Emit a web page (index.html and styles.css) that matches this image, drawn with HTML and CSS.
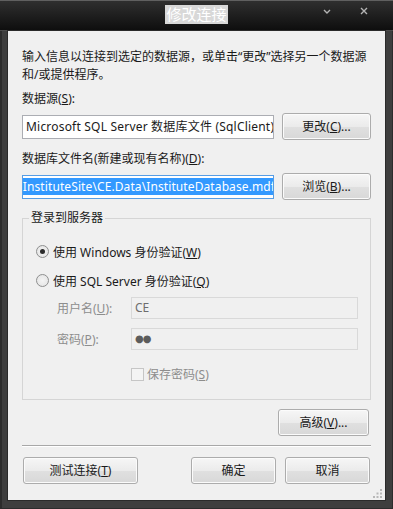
FILE: index.html
```html
<!DOCTYPE html>
<html lang="zh-CN">
<head>
    <meta charset="UTF-8">
    <title>修改连接</title>
    <link rel="stylesheet" href="styles.css">
</head>
<body>
    <div class="window">
        <div class="titlebar">
            <div></div>
            <span class="title">修改连接</span>
            <div class="tb-buttons">
                <svg class="tb-icon" width="12" height="12" viewBox="0 0 12 12">
                    <path d="M3 5 L6 8 L9 5" fill="none" stroke="#b4b4b4" stroke-width="1.4"/>
                </svg>
                <svg class="tb-icon" width="12" height="12" viewBox="0 0 12 12">
                    <path d="M3 3 L9 9 M9 3 L3 9" fill="none" stroke="#b4b4b4" stroke-width="1.4"/>
                </svg>
            </div>
        </div>
        <div class="frame">
            <div class="client">
                <p class="intro">输入信息以连接到选定的数据源，或单击“更改”选择另一个数据源<br>和/或提供程序。</p>

                <div class="label">数据源(<u>S</u>):</div>
                <div class="row">
                    <div class="textbox wide-text">Microsoft SQL Server 数据库文件 (SqlClient)</div>
                    <button class="btn btn-side">更改(<u>C</u>)...</button>
                </div>

                <div class="label label-gap">数据库文件名(新建或现有名称)(<u>D</u>):</div>
                <div class="row">
                    <div class="textbox focused"><span class="selected">InstituteSite\CE.Data\InstituteDatabase.mdf</span></div>
                    <button class="btn btn-side">浏览(<u>B</u>)...</button>
                </div>

                <fieldset class="group">
                    <legend>登录到服务器</legend>
                    <label class="radio-row"><span class="radio checked"></span><span>使用 Windows 身份验证(<u>W</u>)</span></label>
                    <label class="radio-row"><span class="radio"></span><span>使用 SQL Server 身份验证(<u>Q</u>)</span></label>
                    <div class="cred-row first">
                        <span class="cred-label">用户名(<u>U</u>):</span>
                        <div class="textbox disabled">CE</div>
                    </div>
                    <div class="cred-row">
                        <span class="cred-label">密码(<u>P</u>):</span>
                        <div class="textbox disabled"><span class="dots">●●</span></div>
                    </div>
                    <label class="check-row"><span class="checkbox"></span><span>保存密码(<u>S</u>)</span></label>
                </fieldset>

                <div class="adv-row">
                    <button class="btn btn-adv">高级(<u>V</u>)...</button>
                </div>

                <div class="sep"></div>

                <div class="footer">
                    <button class="btn btn-test">测试连接(<u>T</u>)</button>
                    <button class="btn btn-dlg">确定</button>
                    <button class="btn btn-dlg">取消</button>
                </div>

                <svg class="grip" width="9" height="9" viewBox="0 0 9 9">
                    <rect x="7" y="0" width="2" height="2" fill="#b8b8b8"/>
                    <rect x="3.5" y="3.5" width="2" height="2" fill="#b8b8b8"/>
                    <rect x="7" y="3.5" width="2" height="2" fill="#b8b8b8"/>
                    <rect x="0" y="7" width="2" height="2" fill="#b8b8b8"/>
                    <rect x="3.5" y="7" width="2" height="2" fill="#b8b8b8"/>
                    <rect x="7" y="7" width="2" height="2" fill="#b8b8b8"/>
                </svg>
            </div>
        </div>
    </div>
</body>
</html>
```

FILE: styles.css
```css
body {
    margin: 0;
    font-family: "Noto Sans", "Noto Sans CJK SC", sans-serif;
    font-size: 12px;
    color: #1a1a1a;
}
.window {
    width: 393px;
    height: 509px;
    display: flex;
    flex-direction: column;
    background: #3e3e3e;
}
.titlebar {
    height: 31px;
    box-sizing: border-box;
    border-top: 1px solid #606060;
    border-bottom: 1px solid #4c4c4c;
    background: linear-gradient(#2f2f2f, #0e0e0e);
    display: grid;
    grid-template-columns: 1fr auto 1fr;
    align-items: start;
}
.title {
    margin-top: 4px;
    background: #d8d8d8;
    color: #fff;
    font-size: 15px;
    line-height: 19px;
    padding: 0 1px;
}
.tb-buttons {
    display: flex;
    justify-content: flex-end;
    gap: 25px;
    padding-right: 23px;
    padding-top: 4px;
}
.frame {
    flex: 1;
    padding: 0 7px 8px 6px;
    border-left: 2px solid #2c2c2c;
    border-right: 1px solid #2c2c2c;
    border-bottom: 1px solid #2c2c2c;
    display: flex;
}
.client {
    position: relative;
    flex: 1;
    min-width: 0;
    background: #f0f0f0;
    box-shadow: 0 0 0 1px #2a2a2a;
    padding: 0 14px;
}
.intro {
    margin: 0;
    padding-top: 17px;
    line-height: 18px;
}
.label {
    margin-top: 6px;
    line-height: 18px;
}
.label-gap {
    margin-top: 10px;
}
.row {
    margin-top: 5px;
    height: 27px;
    display: flex;
    align-items: center;
    gap: 8px;
}
.textbox {
    flex: 1;
    min-width: 0;
    height: 24px;
    box-sizing: border-box;
    border: 1px solid #abadb3;
    background: #fff;
    padding: 0 3px;
    line-height: 22px;
    white-space: nowrap;
    overflow: hidden;
    display: flex;
    align-items: center;
}
.wide-text {
    letter-spacing: 0.2px;
}
.textbox.focused {
    border-color: #569de5;
    justify-content: flex-end;
    padding: 0 1px;
}
.selected {
    flex: none;
    background: #3399ff;
    color: #fff;
    line-height: 17px;
    letter-spacing: 0.1px;
    margin-right: -3px;
}
.textbox.disabled {
    flex: none;
    width: 227px;
    height: 22px;
    border-color: #d9d9d9;
    background: #f0f0f0;
    color: #6d6d6d;
}
.dots {
    font-family: "DejaVu Sans", sans-serif;
    font-size: 10px;
    letter-spacing: -1px;
    color: #5c5c5c;
}
.btn {
    font-family: inherit;
    font-size: 12px;
    color: #1a1a1a;
    height: 27px;
    box-sizing: border-box;
    padding: 0;
    border: 1px solid #acacac;
    border-radius: 3px;
    background: linear-gradient(#f6f6f6, #ebebeb 50%, #e0e0e0 51%, #d8d8d8);
    box-shadow: inset 0 0 0 1px #fbfbfb;
    line-height: 25px;
}
.btn-side {
    width: 89px;
    flex: none;
}
.group {
    margin: 9px 0 0 0;
    min-width: 0;
    border: 1px solid #d5d5d5;
    padding: 10px 12px 16px 13px;
}
.group legend {
    padding: 0 2px;
    margin-left: -7px;
    line-height: 18px;
}
.radio-row {
    height: 29px;
    display: flex;
    align-items: center;
    gap: 4px;
}
.radio {
    width: 13px;
    height: 13px;
    box-sizing: border-box;
    border: 1px solid #8e8f8f;
    border-radius: 50%;
    background: radial-gradient(circle, #f4f4f4 0%, #e2e2e2 100%);
    display: flex;
    align-items: center;
    justify-content: center;
}
.radio.checked::after {
    content: "";
    width: 5px;
    height: 5px;
    border-radius: 50%;
    background: #2b2b2b;
}
.cred-row {
    margin-top: 9px;
    margin-left: 21px;
    display: flex;
    align-items: center;
}
.cred-row.first {
    margin-top: 2px;
}
.cred-label {
    width: 74px;
    color: #8d8d8d;
}
.check-row {
    margin-top: 15px;
    margin-left: 95px;
    height: 18px;
    display: flex;
    align-items: center;
    gap: 3px;
    color: #8d8d8d;
}
.checkbox {
    width: 13px;
    height: 13px;
    box-sizing: border-box;
    border: 1px solid #c6c6c6;
    background: #f4f4f4;
}
.adv-row {
    margin-top: 9px;
    display: flex;
    justify-content: flex-end;
    padding-right: 2px;
}
.btn-adv {
    width: 91px;
}
.sep {
    margin-top: 9px;
    height: 1px;
    background: #a8a8a8;
    border-bottom: 1px solid #fff;
}
.footer {
    margin-top: 10px;
    display: flex;
    gap: 9px;
    padding: 0 1px;
}
.btn-test {
    width: 115px;
    margin-right: auto;
}
.btn-dlg {
    width: 85px;
}
.grip {
    position: absolute;
    right: 3px;
    bottom: 2px;
}
```
